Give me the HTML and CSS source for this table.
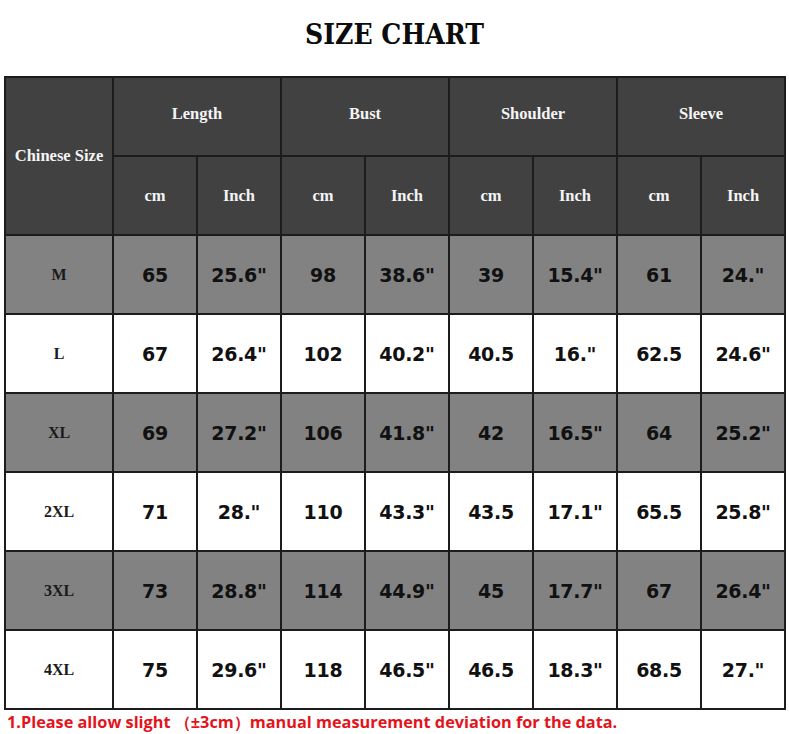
FILE: index.html
```html
<!DOCTYPE html>
<html>
<head>
<meta charset="utf-8">
<link rel="stylesheet" href="styles.css">
</head>
<body>
<div class="page">
  <h1 class="title">SIZE CHART</h1>
  <table class="chart">
    <colgroup>
      <col class="c-size">
      <col class="c-val"><col class="c-val"><col class="c-val"><col class="c-val">
      <col class="c-val"><col class="c-val"><col class="c-val"><col class="c-val">
    </colgroup>
    <thead>
      <tr class="hrow">
        <th rowspan="2">Chinese Size</th>
        <th class="group" colspan="2">Length</th>
        <th class="group" colspan="2">Bust</th>
        <th class="group" colspan="2">Shoulder</th>
        <th class="group" colspan="2">Sleeve</th>
      </tr>
      <tr class="hrow">
        <th>cm</th><th>Inch</th>
        <th>cm</th><th>Inch</th>
        <th>cm</th><th>Inch</th>
        <th>cm</th><th>Inch</th>
      </tr>
    </thead>
    <tbody>
      <tr class="grey"><th>M</th><td>65</td><td>25.6"</td><td>98</td><td>38.6"</td><td>39</td><td>15.4"</td><td>61</td><td>24."</td></tr>
      <tr class="white"><th>L</th><td>67</td><td>26.4"</td><td>102</td><td>40.2"</td><td>40.5</td><td>16."</td><td>62.5</td><td>24.6"</td></tr>
      <tr class="grey"><th>XL</th><td>69</td><td>27.2"</td><td>106</td><td>41.8"</td><td>42</td><td>16.5"</td><td>64</td><td>25.2"</td></tr>
      <tr class="white"><th>2XL</th><td>71</td><td>28."</td><td>110</td><td>43.3"</td><td>43.5</td><td>17.1"</td><td>65.5</td><td>25.8"</td></tr>
      <tr class="grey"><th>3XL</th><td>73</td><td>28.8"</td><td>114</td><td>44.9"</td><td>45</td><td>17.7"</td><td>67</td><td>26.4"</td></tr>
      <tr class="white"><th>4XL</th><td>75</td><td>29.6"</td><td>118</td><td>46.5"</td><td>46.5</td><td>18.3"</td><td>68.5</td><td>27."</td></tr>
    </tbody>
  </table>
  <p class="note">1.Please allow slight （±3cm）manual measurement deviation for the data.</p>
</div>
</body>
</html>
```
FILE: styles.css
```css
* { box-sizing: border-box; }
html, body { margin: 0; padding: 0; background: #fff; }
.page {
  width: 789px;
  height: 734px;
  padding: 0 4px 0 4px;
  overflow: hidden;
}
.title {
  margin: 0;
  height: 76px;
  padding-top: 17px;
  text-align: center;
  font-family: "DejaVu Serif", serif;
  font-weight: 900;
  font-stretch: condensed;
  font-size: 28px;
  line-height: 36px;
  letter-spacing: 0;
  color: #0c0c0c;
}
.chart {
  border-collapse: collapse;
  table-layout: fixed;
  width: 781px;
}
.c-size { width: 108px; }
.c-val { width: 84px; }
.chart th, .chart td {
  border: 2px solid #1c1c1c;
  height: 79px;
  padding: 0;
  text-align: center;
  vertical-align: middle;
}
.hrow th {
  background: #414141;
  color: #f4f4f4;
  font-family: "Liberation Serif", serif;
  font-weight: bold;
  font-size: 16.5px;
}
.hrow th.group { padding-bottom: 5px; }
tbody th {
  font-family: "Liberation Serif", serif;
  font-weight: bold;
  font-size: 16px;
  color: #1a1a1a;
}
tbody td {
  font-family: "DejaVu Sans", sans-serif;
  font-weight: bold;
  font-size: 19px;
  letter-spacing: -0.3px;
  color: #111;
}
.grey th, .grey td { background: #828282; }
.white th, .white td { background: #ffffff; }
.note {
  margin: 1px 0 0 3px;
  font-family: "Open Sans", sans-serif;
  font-weight: bold;
  font-size: 16.3px;
  line-height: 22px;
  color: #e3141c;
  white-space: nowrap;
}
```
